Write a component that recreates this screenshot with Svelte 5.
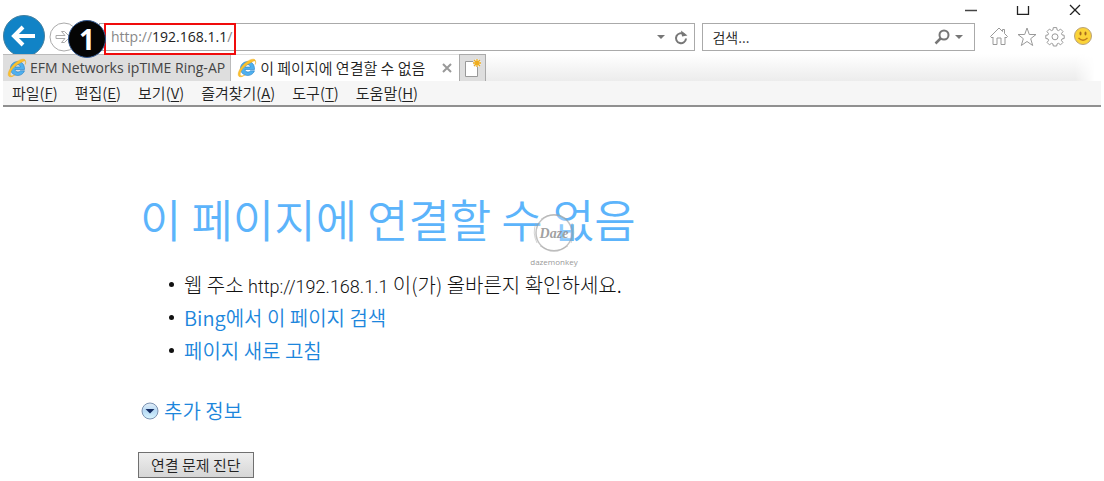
<script>
  const menus = [
    ['파일', 'F'],
    ['편집', 'E'],
    ['보기', 'V'],
    ['즐겨찾기', 'A'],
    ['도구', 'T'],
    ['도움말', 'H'],
  ];
  let address = $state('http://192.168.1.1/');
  let query = $state('');
</script>

{#snippet ieLogo()}
  <svg class="ie" viewBox="0 0 20 20" width="20" height="20" aria-hidden="true">
    <path d="M17.500 12.800c-1 2.700-3.500 4.700-6.700 4.700-4.200 0-7.300-2.900-7.300-6.900s3-7 7.200-7c4.500 0 7 3.100 6.800 7.900H8c.2 1.500 1.300 2.500 2.900 2.500 1.200 0 2-.4 2.500-1.200zM8 9h5.400c-.2-1.500-1.200-2.300-2.600-2.300S8.300 7.500 8 9z" fill="#4fb0ee" stroke="#1d7cc8" stroke-width=".6" />
    <path d="M14.500 4.300C17 2.600 18.500 2.500 18.700 4c.1.900-.1 1.700-.5 2.500.9-2.900.5-4.900-1.300-5.300C12.300.3 3.400 7.700 1.500 14.200c-.8 2.800-.1 4.700 2.100 4.600 1.500-.1 3-.9 4.400-1.900-3.200 1.700-5.200 1.200-4.700-1.400C4 11.300 9.800 6.300 14.500 4.300z" fill="#fbc12d" stroke="#e8a51c" stroke-width=".4" />
  </svg>
{/snippet}

<div class="browser">
  <header>
    <div class="caption">
      <button aria-label="최소화"><svg width="14" height="14" viewBox="0 0 14 14"><path d="M1 9.500h12" stroke="#444" stroke-width="1.500" /></svg></button>
      <button aria-label="최대화"><svg width="14" height="14" viewBox="0 0 14 14"><path d="M1.500 5v8.500h11V5" fill="none" stroke="#222" stroke-width="1.300" /></svg></button>
      <button aria-label="닫기"><svg width="14" height="14" viewBox="0 0 14 14"><path d="M2 4l10 10M12 4L2 14" stroke="#222" stroke-width="1.300" /></svg></button>
    </div>

    <div class="toolbar">
      <button class="back" aria-label="뒤로">
        <svg width="42" height="42" viewBox="0 0 42 42"><circle cx="21" cy="21" r="20.500" fill="#1183c6" stroke="#437f9f" /><path d="M32 21H12M20 12l-9 9 9 9" fill="none" stroke="#fff" stroke-width="4" /></svg>
      </button>
      <button class="forward" aria-label="앞으로">
        <svg width="30" height="30" viewBox="0 0 30 30"><circle cx="15" cy="15" r="14" fill="#fff" stroke="#aaa" /><path d="M7 13.500h9l-3.500-4h3l5.500 5.500-5.500 5.500h-3l3.500-4H7z" fill="#fff" stroke="#aaa" /></svg>
      </button>
      <div class="field address">
        <input type="text" aria-label="주소" bind:value={address} />
        <div class="shown" aria-hidden="true">http://<b>192.168.1.1</b>/</div>
        <button aria-label="주소 목록"><svg width="10" height="6" viewBox="0 0 10 6"><path d="M1 1h8L5 5z" fill="#777" /></svg></button>
        <button aria-label="새로 고침"><svg width="14" height="16" viewBox="0 0 14 16"><path d="M10 5.200A5 5 0 1 0 12 9.500" fill="none" stroke="#777" stroke-width="2" /><path d="M7.500 1v6H13z" fill="#777" transform="rotate(-10 10 4)" /></svg></button>
        <span class="outline"></span>
        <span class="step">1</span>
      </div>
      <div class="field search">
        <input type="text" aria-label="검색" placeholder="검색..." bind:value={query} />
        <button aria-label="검색 실행"><svg width="16" height="16" viewBox="0 0 16 16"><circle cx="10" cy="6" r="4.500" fill="none" stroke="#777" stroke-width="2" /><path d="M7 9L1.500 14.500" stroke="#777" stroke-width="2.500" /></svg></button>
        <button aria-label="검색 공급자"><svg width="10" height="6" viewBox="0 0 10 6"><path d="M1 1h8L5 5z" fill="#777" /></svg></button>
      </div>
      <div class="tools">
        <button aria-label="홈"><svg width="20" height="20" viewBox="0 0 20 20"><path d="M1.500 9.500L10 1l3.500 3.500V2.500h2v4l3 3-1.500 1.500-1-1v7.500h-4v-6.500H8v6.500H4V10l-1 1z" fill="#fff" stroke="#999" /></svg></button>
        <button aria-label="즐겨찾기"><svg width="20" height="20" viewBox="0 0 20 20"><path d="M10 1l2.300 6.500H19l-5.300 4.200 2 6.800L10 14.500l-5.700 4 2-6.800L1 7.500h6.700z" fill="#fff" stroke="#999" /></svg></button>
        <button aria-label="도구"><svg width="20" height="20" viewBox="0 0 20 20"><path d="M8.300 .6h3.400l.4 2.400 1.400.6 2.100-1.500L18 4.500l-1.500 2.100.5 1.300 2.200.4v3.200l-2.200.4-.6 1.400L17.900 15.500l-2.300 2.300-2.100-1.500-1.400.6-.4 2.100H8.300l-.4-2.100-1.400-.6-2.100 1.500L2.100 15.500l1.500-2.200-.6-1.400-2.200-.4V8.300L3 7.900l.5-1.300L2 4.500l2.400-2.400 2.100 1.500 1.400-.6z" fill="#fff" stroke="#999" /><circle cx="10" cy="9.800" r="3" fill="#fff" stroke="#999" /></svg></button>
        <button aria-label="의견 보내기"><svg width="20" height="20" viewBox="0 0 20 20"><circle cx="10" cy="9" r="8.500" fill="#fbd338" stroke="#b9a27b" /><ellipse cx="7.500" cy="6.500" rx="1" ry="2" fill="#a46a1e" /><ellipse cx="12.500" cy="6.500" rx="1" ry="2" fill="#a46a1e" /><path d="M5.500 11q4.500 4.500 9 0" fill="none" stroke="#bd7b1c" stroke-width="1.200" /></svg></button>
      </div>
    </div>

    <div class="tabs">
      <button class="tab">{@render ieLogo()}<span>EFM Networks ipTIME Ring-AP</span></button>
      <div class="tab active">
        {@render ieLogo()}<span>이 페이지에 연결할 수 없음</span>
        <button class="close" aria-label="탭 닫기"><svg width="10" height="10" viewBox="0 0 10 10"><path d="M1 1l8 8M9 1L1 9" stroke="#999" stroke-width="2" /></svg></button>
      </div>
      <button class="new" aria-label="새 탭">
        <svg width="20" height="20" viewBox="0 0 20 20"><path d="M2.500 3.500h12v15h-12z" fill="#fff" stroke="#999" /><circle cx="14" cy="5" r="4" fill="#eee" /><path d="M14 1v8M10 5h8M11 2l6 6M17 2l-6 6" stroke="#f0ad1c" stroke-width="1.300" /></svg>
      </button>
      <div class="rest"></div>
    </div>

    <nav>
      {#each menus as [name, key]}
        <button>{name}(<u>{key}</u>)</button>
      {/each}
    </nav>
  </header>

  <main>
    <h1>이 페이지에 연결할 수 없음
      <span class="mark" aria-hidden="true">
        <svg width="42" height="42" viewBox="0 0 42 42"><circle cx="21" cy="21" r="18" fill="#fff" fill-opacity=".3" stroke="#999" stroke-opacity=".6" stroke-width="1.500" /><path d="M8 7Q21-2 34 7M7 34q14 9 28 0M3 11q-4 10 1 20M39 11q4 10-1 20" fill="none" stroke="#aaa" stroke-opacity=".5" /><text x="21" y="26" text-anchor="middle">Daze</text></svg>
        <small>dazemonkey</small>
      </span>
    </h1>
    <ul>
      <li><span>웹 주소 <span class="url">http://192.168.1.1</span> 이(가) 올바른지 확인하세요.</span></li>
      <li><a href="#search">Bing에서 이 페이지 검색</a></li>
      <li><a href="#refresh">페이지 새로 고침</a></li>
    </ul>
    <button class="more">
      <svg width="18" height="18" viewBox="0 0 18 18" aria-hidden="true">
        <defs><linearGradient id="orb" x2="0" y2="1"><stop stop-color="#e3eef8" /><stop offset=".5" stop-color="#b8daf5" /><stop offset="1" stop-color="#d9f6ff" /></linearGradient></defs>
        <circle cx="9" cy="9" r="8" fill="url(#orb)" stroke="#7d93b2" /><path d="M4.500 7h9L9 11.500z" fill="#142c62" />
      </svg>추가 정보
    </button>
    <button class="diagnose">연결 문제 진단</button>
  </main>
</div>

<style>
  :global(body) { background: #fff; }
  .browser { font: 350 15px/20px "Noto Sans CJK KR", sans-serif; color: #222; padding: 0 3px; }
  button { font: inherit; color: inherit; background: none; border: 0; padding: 0; display: flex; align-items: center; justify-content: center; }
  svg { display: block; flex: none; }
  .caption { display: flex; justify-content: flex-end; gap: 38px; padding-right: 19px; height: 15px; }
  .toolbar { display: flex; align-items: center; height: 39px; padding: 5px 8px 0 0; box-sizing: border-box; }
  .back { align-self: flex-start; margin-top: -5px; }
  .forward { margin-left: 4px; }
  .field { display: flex; align-items: center; box-sizing: border-box; height: 28px; border: 1px solid #aaa; background: #fff; position: relative; }
  .address { flex: 587 1 0; gap: 8px; padding-right: 6px; margin-left: 20px; z-index: 1; }
  .search { flex: 260 1 0; gap: 4px; margin-left: 7px; padding-right: 10px; }
  input { flex: 1; min-width: 0; border: 0; outline: 0; padding: 0 0 0 9px; font: inherit; font-size: 14px; color: #222; background: none; }
  input::placeholder { color: #222; opacity: 1; }
  .address input { color: transparent; caret-color: #222; }
  .shown { position: absolute; left: 11px; font: 14px/20px "Open Sans", sans-serif; color: #888; pointer-events: none; }
  .shown b { font-weight: 400; color: #222; }
  .outline { position: absolute; left: 4px; top: -1px; width: 132px; height: 32px; box-sizing: border-box; border: 2px solid #f00c0c; pointer-events: none; }
  .step { position: absolute; left: -32px; top: -4px; width: 36px; height: 36px; border: 1px solid #345a91; border-radius: 50%; background: #050505; color: #fff; font: 700 28px/36px "Open Sans", sans-serif; text-align: center; }
  .tools { display: flex; gap: 8px; margin-left: 14px; }
  .tabs { display: flex; height: 27px; background: #fff; position: relative; }
  .tab { display: flex; align-items: center; gap: 3px; box-sizing: border-box; padding: 0 5px 0 4px; background: #dedede; border: 1px solid #bbb; border-width: 1px 1px 0 0; white-space: nowrap; font: 14px/20px "Open Sans", sans-serif; color: #444; }
  .active { background: #fff; padding: 0 7px 0 6px; border-right: 0; border-color: #ddd; font: 350 15px/20px "Noto Sans CJK KR", sans-serif; color: #222; }
  .close { margin-left: 14px; }
  .new { width: 27px; box-sizing: border-box; background: #dedede; border: 1px solid #aaa; border-bottom: 0; }
  .rest { flex: 1; background: linear-gradient(#fff, #ececec); margin-right: 6px; mask-image: linear-gradient(to left, transparent, #000 20px); }
  nav { display: flex; gap: 17px; height: 24px; padding-left: 9px; background: #f6f6f6; border-bottom: 2px solid #909090; }
  u { text-underline-offset: 2px; }
  main { padding: 82px 0 0 135px; font-size: 20px; line-height: 33px; color: #111; }
  h1 { position: relative; width: max-content; margin: 0 0 0 2px; font: 350 45px/60px "Noto Sans CJK KR", sans-serif; color: #5cb4fb; }
  .mark { position: absolute; left: 389px; top: 23px; width: 50px; display: flex; flex-direction: column; align-items: center; color: #aaa; }
  .mark text { font: italic 700 14px "Liberation Serif", serif; fill: #888; fill-opacity: .8; }
  small { font: 8px/16px "Open Sans", sans-serif; color: #999; }
  ul { margin: 19px 0 0; padding-left: 31px; list-style: none; }
  li { display: flex; align-items: center; gap: 10px; height: 33px; font-weight: 300; }
  li::before { content: ""; width: 5px; height: 5px; border-radius: 50%; background: #111; }
  .url { font: 300 18px/20px Roboto, sans-serif; }
  a, .more { color: #1c86dc; text-decoration: none; font-weight: 350; }
  .more { gap: 5px; margin: 27px 0 0 3px; }
  .diagnose { margin-top: 25px; height: 26px; padding: 0 12px; border: 1px solid #707070; background: linear-gradient(#eee, #d6d6d6); font-size: 15px; line-height: 20px; color: #222; }
</style>
